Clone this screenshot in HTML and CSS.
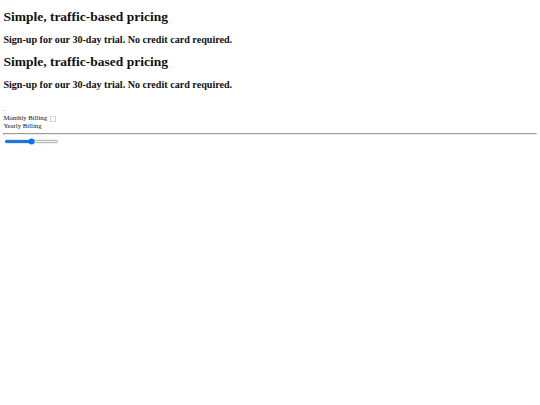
FILE: index.html
```html
<!DOCTYPE html>
<html>
<head>
<meta charset="utf-8">
<link rel="stylesheet" href="styles.css">
</head>
<body>
<header class="intro">
  <h1 class="title first">Simple, traffic-based pricing</h1>
  <h2 class="subtitle">Sign-up for our 30-day trial. No credit card required.</h2>
</header>
<main class="pricing">
  <h1 class="title">Simple, traffic-based pricing</h1>
  <h2 class="subtitle">Sign-up for our 30-day trial. No credit card required.</h2>
  <div class="card">
    <div class="dots">...</div>
    <div class="billing">
      <span class="option">Monthly Billing</span>
      <input class="check" type="checkbox">
      <br>
      <span class="option">Yearly Billing</span>
    </div>
    <hr class="divider">
    <input class="slider" type="range" min="0" max="100" value="50">
  </div>
</main>
</body>
</html>
```
FILE: styles.css
```css
html {
  zoom: 0.421875;
}
body {
  margin: 8px;
  font-family: "Liberation Serif", serif;
  font-size: 16px;
  color: #111;
}
.title {
  font-size: 32px;
  margin: 0.67em 0;
}
.title.first {
  margin-top: 14px;
}
.subtitle {
  font-size: 24px;
  margin: 0.83em 0;
}
.card {
  padding-top: 19px;
}
.dots {
  font-size: 9px;
  line-height: 18px;
  color: #555;
}
.billing {
  line-height: 19px;
}
.check {
  margin: 0 4px;
  vertical-align: middle;
}
.divider {
  margin: 6px 0 5px;
}
```
